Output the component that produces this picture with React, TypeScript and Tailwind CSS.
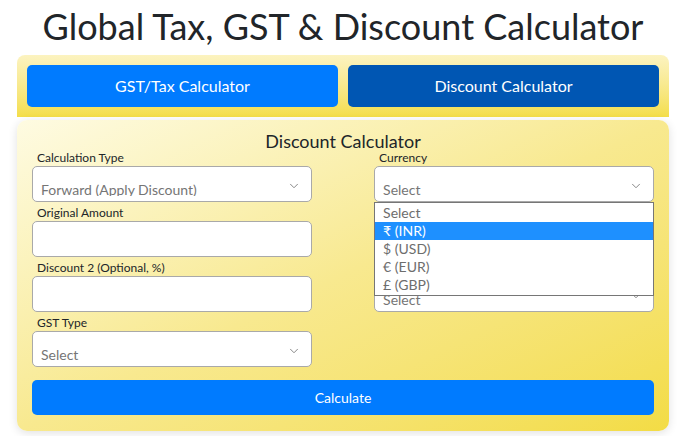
import { ChevronDown } from "lucide-react";

const font = { fontFamily: "Lato, 'Noto Sans', sans-serif" };

const SelectBox = ({ value }: { value: string }) => (
  <div className="relative h-[36px] rounded-[5px] border border-[#a9a9a9] bg-white pl-[8px]">
    <div className="mt-[14px] h-[15px] overflow-hidden text-[14px] leading-[17px] text-[#757575]">{value}</div>
    <ChevronDown className="absolute right-[10px] top-[12px] h-[14px] w-[14px] text-[#777]" strokeWidth={1.5} />
  </div>
);

const InputBox = () => <div className="h-[36px] rounded-[5px] border border-[#a9a9a9] bg-white" />;

const Field = ({ label, children, first }: { label: string; children: React.ReactNode; first?: boolean }) => (
  <div>
    <div className={`${first ? "mt-0" : "mt-[3px]"} mb-[1px] pl-[5px] text-[12px] leading-[15px] text-[#212529]`}>{label}</div>
    {children}
  </div>
);

const currencies = ["Select", "₹ (INR)", "$ (USD)", "€ (EUR)", "£ (GBP)"];

export default function App() {
  return (
    <div className="min-h-screen bg-white pl-[17px] pr-[10px]" style={font}>
      {/* Title */}
      <h1 className="mb-[5px] whitespace-nowrap pt-[2px] text-center text-[36px] leading-[48px] text-[#212529]">
        Global Tax, GST &amp; Discount Calculator
      </h1>

      {/* Tabs */}
      <div className="flex gap-[10px] rounded-t-[8px] bg-gradient-to-b from-[#fcf3c0] to-[#f4de48] p-[10px]">
        <button className="h-[42px] flex-1 rounded-[5px] bg-[#007bff] text-[16px] text-white">GST/Tax Calculator</button>
        <button className="h-[42px] flex-1 rounded-[5px] bg-[#0056b3] text-[16px] text-white">Discount Calculator</button>
      </div>

      {/* Card */}
      <div className="mt-[3px] rounded-[10px] bg-gradient-to-br from-[#fefbe2] via-[#f8e98f] to-[#f3dc44] px-[15px] pt-[13px] pb-[16px] shadow-[0_2px_10px_rgba(0,0,0,0.12)]">
        <h2 className="h-[17px] text-center text-[18px] leading-[17px] text-[#212529]">Discount Calculator</h2>

        <div className="flex justify-between">
          <div className="w-[45%]">
            <Field label="Calculation Type" first>
              <SelectBox value="Forward (Apply Discount)" />
            </Field>
            <Field label="Original Amount">
              <InputBox />
            </Field>
            <Field label="Discount 2 (Optional, %)">
              <InputBox />
            </Field>
            <Field label="GST Type">
              <SelectBox value="Select" />
            </Field>
          </div>

          <div className="relative w-[45%]">
            <Field label="Currency" first>
              <SelectBox value="Select" />
            </Field>
            <Field label="Discount 1 (%)">
              <InputBox />
            </Field>
            <Field label="Tax Rate">
              <SelectBox value="Select" />
            </Field>

            {/* Open currency list */}
            <div className="absolute left-0 right-0 top-[52px] border border-[#767676] bg-white py-px">
              {currencies.map((c, i) => (
                <div
                  key={c}
                  className={`h-[18px] pl-[8px] text-[14px] leading-[18px] ${
                    i === 1 ? "bg-[#1e90ff] text-white" : "text-[#6d6d6d]"
                  }`}
                >
                  {c}
                </div>
              ))}
            </div>
          </div>
        </div>

        <button className="mt-[13px] h-[35px] w-full rounded-[5px] bg-[#007bff] text-[14px] text-white">Calculate</button>
      </div>
    </div>
  );
}
